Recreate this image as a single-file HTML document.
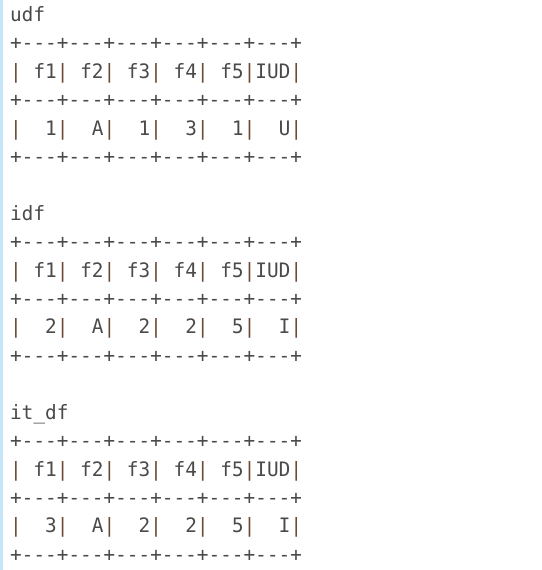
<!DOCTYPE html>
<html><head><style>
html,body{margin:0;padding:0;background:#fff;width:542px;height:570px;overflow:hidden}
.bar{position:absolute;left:0;top:0;width:3px;height:570px;background:#c5e6f8}
pre{position:absolute;left:10px;top:1px;margin:0;font-family:"DejaVu Sans Mono","Liberation Mono",monospace;font-size:19.4px;line-height:28.4px;color:#4a4a4a}
.p{color:#6b4a35}
</style></head><body>
<div class="bar"></div>
<pre>udf
+---+---+---+---+---+---+
<span class="p">|</span> f1<span class="p">|</span> f2<span class="p">|</span> f3<span class="p">|</span> f4<span class="p">|</span> f5<span class="p">|</span>IUD<span class="p">|</span>
+---+---+---+---+---+---+
<span class="p">|</span>  1<span class="p">|</span>  A<span class="p">|</span>  1<span class="p">|</span>  3<span class="p">|</span>  1<span class="p">|</span>  U<span class="p">|</span>
+---+---+---+---+---+---+

idf
+---+---+---+---+---+---+
<span class="p">|</span> f1<span class="p">|</span> f2<span class="p">|</span> f3<span class="p">|</span> f4<span class="p">|</span> f5<span class="p">|</span>IUD<span class="p">|</span>
+---+---+---+---+---+---+
<span class="p">|</span>  2<span class="p">|</span>  A<span class="p">|</span>  2<span class="p">|</span>  2<span class="p">|</span>  5<span class="p">|</span>  I<span class="p">|</span>
+---+---+---+---+---+---+

it_df
+---+---+---+---+---+---+
<span class="p">|</span> f1<span class="p">|</span> f2<span class="p">|</span> f3<span class="p">|</span> f4<span class="p">|</span> f5<span class="p">|</span>IUD<span class="p">|</span>
+---+---+---+---+---+---+
<span class="p">|</span>  3<span class="p">|</span>  A<span class="p">|</span>  2<span class="p">|</span>  2<span class="p">|</span>  5<span class="p">|</span>  I<span class="p">|</span>
+---+---+---+---+---+---+</pre>
</body></html>
